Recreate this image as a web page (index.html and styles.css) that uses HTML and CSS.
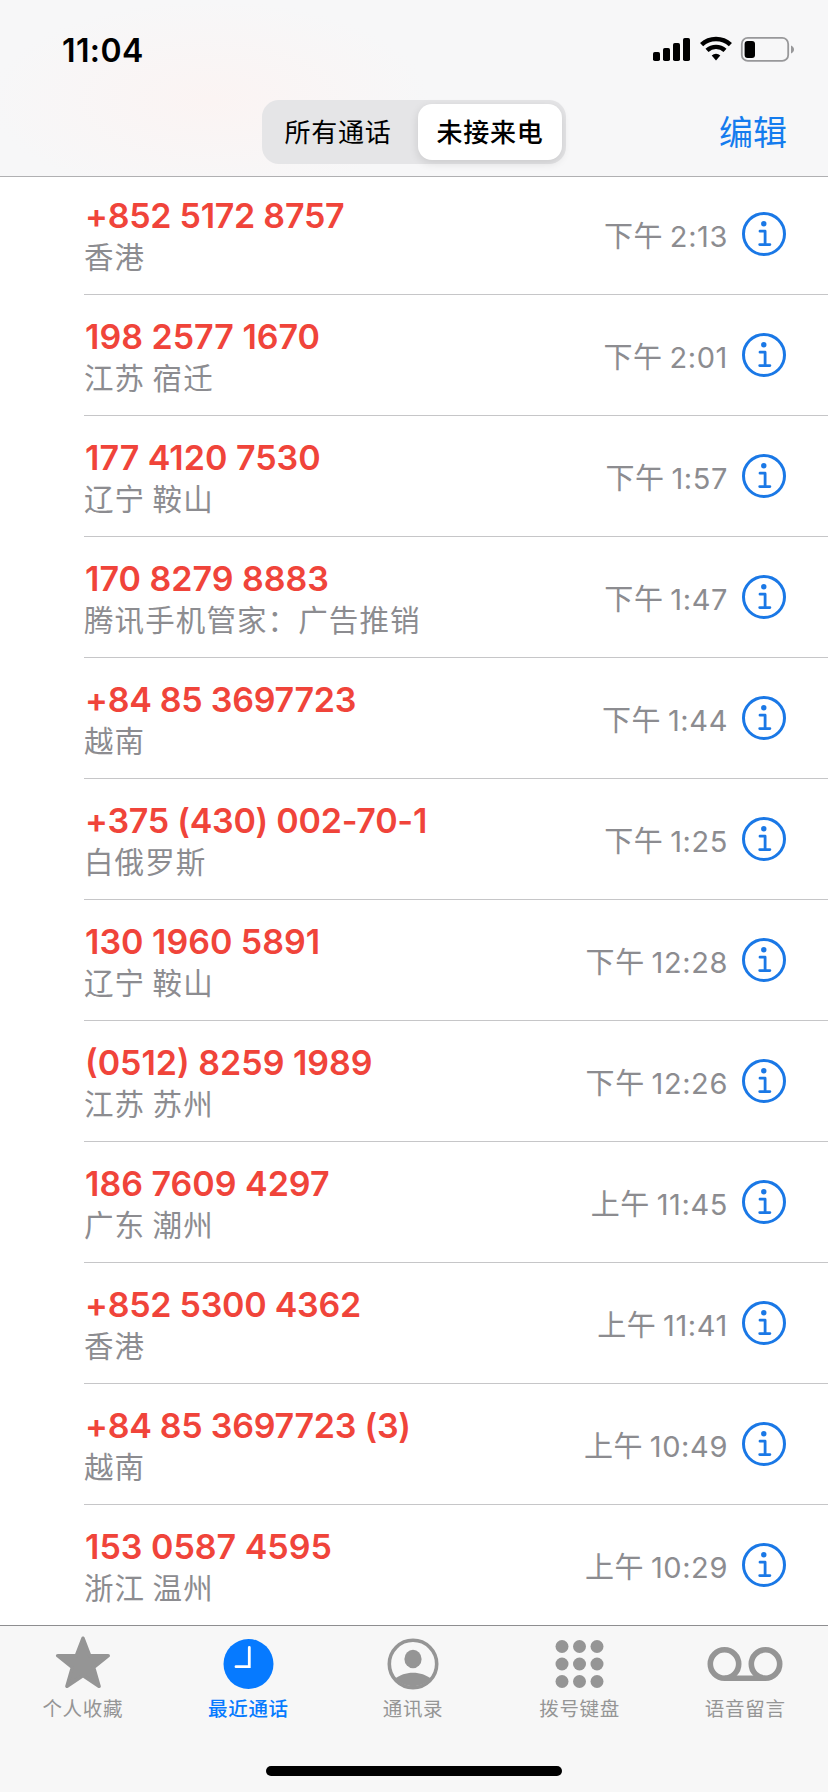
FILE: index.html
```
<!DOCTYPE html>
<html lang="zh-CN">
<head>
<meta charset="utf-8">
<title>最近通话</title>
<link rel="stylesheet" href="styles.css">
</head>
<body>
<svg class="defs" aria-hidden="true">
  <symbol id="info" viewBox="0 0 44 44">
    <circle cx="22" cy="22" r="20.5" fill="none" stroke="currentColor" stroke-width="3"/>
    <circle cx="21.8" cy="11.7" r="2.7" fill="currentColor"/>
    <path d="M18 19.2h5.1v13.3M17.7 32.6h10.2" fill="none" stroke="currentColor" stroke-width="2.8" stroke-linecap="round" stroke-linejoin="round"/>
  </symbol>
</svg>
<div class="phone">
  <header class="header">
    <div class="status">
      <div class="clock">11:04</div>
      <svg class="status-icons" width="142" height="26" viewBox="0 0 142 26">
        <rect x="0" y="16" width="7" height="9" rx="1.8"/>
        <rect x="10" y="12" width="7" height="13" rx="1.8"/>
        <rect x="20" y="7" width="7" height="18" rx="1.8"/>
        <rect x="30" y="2" width="7" height="23" rx="1.8"/>
        <path d="M48.6 8.6a21.2 21.2 0 0 1 28.8 0" fill="none" stroke="#000" stroke-width="4.6"/>
        <path d="M54 14.4a13.2 13.2 0 0 1 18 0" fill="none" stroke="#000" stroke-width="4.4"/>
        <path d="M58.7 19.4a6.4 6.4 0 0 1 8.6 0L63 24.6z"/>
        <rect x="88.8" y="1.9" width="46.4" height="23" rx="6" fill="none" stroke="#98989a" stroke-width="1.8"/>
        <rect x="91.6" y="5" width="10.4" height="17" rx="3"/>
        <path d="M138 9.5c4 1.4 4 6.600 0 8z" fill="#98989a"/>
      </svg>
    </div>
    <nav class="navbar">
      <div class="segmented">
        <div class="segment">所有通话</div>
        <div class="segment active">未接来电</div>
      </div>
      <div class="edit">编辑</div>
    </nav>
  </header>
  <main class="list">
    <div class="row"><div class="who"><div class="num intl">+852 5172 8757</div><div class="place">香港</div></div><div class="time">下午 2:13</div><svg class="info"><use href="#info"/></svg></div>
    <div class="row"><div class="who"><div class="num">198 2577 1670</div><div class="place">江苏 宿迁</div></div><div class="time">下午 2:01</div><svg class="info"><use href="#info"/></svg></div>
    <div class="row"><div class="who"><div class="num">177 4120 7530</div><div class="place">辽宁 鞍山</div></div><div class="time">下午 1:57</div><svg class="info"><use href="#info"/></svg></div>
    <div class="row"><div class="who"><div class="num">170 8279 8883</div><div class="place">腾讯手机管家：广告推销</div></div><div class="time">下午 1:47</div><svg class="info"><use href="#info"/></svg></div>
    <div class="row"><div class="who"><div class="num intl">+84 85 3697723</div><div class="place">越南</div></div><div class="time">下午 1:44</div><svg class="info"><use href="#info"/></svg></div>
    <div class="row"><div class="who"><div class="num intl">+375 (430) 002-70-1</div><div class="place">白俄罗斯</div></div><div class="time">下午 1:25</div><svg class="info"><use href="#info"/></svg></div>
    <div class="row"><div class="who"><div class="num">130 1960 5891</div><div class="place">辽宁 鞍山</div></div><div class="time">下午 12:28</div><svg class="info"><use href="#info"/></svg></div>
    <div class="row"><div class="who"><div class="num">(0512) 8259 1989</div><div class="place">江苏 苏州</div></div><div class="time">下午 12:26</div><svg class="info"><use href="#info"/></svg></div>
    <div class="row"><div class="who"><div class="num">186 7609 4297</div><div class="place">广东 潮州</div></div><div class="time">上午 11:45</div><svg class="info"><use href="#info"/></svg></div>
    <div class="row"><div class="who"><div class="num intl">+852 5300 4362</div><div class="place">香港</div></div><div class="time">上午 11:41</div><svg class="info"><use href="#info"/></svg></div>
    <div class="row"><div class="who"><div class="num intl">+84 85 3697723 (3)</div><div class="place">越南</div></div><div class="time">上午 10:49</div><svg class="info"><use href="#info"/></svg></div>
    <div class="row"><div class="who"><div class="num">153 0587 4595</div><div class="place">浙江 温州</div></div><div class="time">上午 10:29</div><svg class="info"><use href="#info"/></svg></div>
  </main>
  <footer class="tabbar">
    <div class="tabs">
      <div class="tab">
        <svg width="56" height="54" viewBox="0 0 56 54"><path d="M28 2.300 34.600 19.700H53.200L38.600 31.400 44 50.200 28 39.500 12 50.200 17.400 31.400 2.800 19.700H21.400z" fill="currentColor" stroke="currentColor" stroke-width="3.600" stroke-linejoin="round"/></svg>
        <span>个人收藏</span>
      </div>
      <div class="tab current">
        <svg width="56" height="54" viewBox="0 0 56 54"><circle cx="28.500" cy="28" r="25" fill="currentColor"/><path d="M29.300 11.500V30.700H16" fill="none" stroke="#fff" stroke-width="2.800" stroke-linecap="round"/></svg>
        <span>最近通话</span>
      </div>
      <div class="tab contacts">
        <svg width="56" height="54" viewBox="0 0 56 54"><circle cx="28" cy="28" r="23.700" fill="none" stroke="currentColor" stroke-width="3.600"/><ellipse cx="28" cy="23" rx="8.600" ry="9.200" fill="currentColor"/><path d="M10.500 42.600C14.500 39 21 36.800 28 36.800S41.500 39 45.500 42.600A23.700 23.700 0 0 1 10.500 42.600z" fill="currentColor"/></svg>
        <span>通讯录</span>
      </div>
      <div class="tab">
        <svg width="56" height="54" viewBox="0 0 56 54" fill="currentColor"><circle cx="10" cy="10.500" r="6.500"/><circle cx="27.500" cy="10.500" r="6.500"/><circle cx="45" cy="10.500" r="6.500"/><circle cx="10" cy="28" r="6.500"/><circle cx="27.500" cy="28" r="6.500"/><circle cx="45" cy="28" r="6.500"/><circle cx="10" cy="45.500" r="6.500"/><circle cx="27.500" cy="45.500" r="6.500"/><circle cx="45" cy="45.500" r="6.500"/></svg>
        <span>拨号键盘</span>
      </div>
      <div class="tab">
        <svg width="80" height="54" viewBox="0 0 80 54" fill="none" stroke="currentColor" stroke-width="5.600"><circle cx="19.500" cy="28" r="14.200"/><circle cx="60.500" cy="28" r="14.200"/><path d="M19.500 42.200H60.500"/></svg>
        <span>语音留言</span>
      </div>
    </div>
    <div class="home"></div>
  </footer>
</div>
</body>
</html>
```
FILE: styles.css
```
* { box-sizing: border-box; }
body {
  margin: 0;
  background: #fff;
  font-family: Inter, "Noto Sans CJK SC", sans-serif;
}
.defs { position: absolute; width: 0; height: 0; }
.phone { width: 828px; height: 1792px; display: flex; flex-direction: column; overflow: hidden; }

.header {
  height: 177px;
  flex: none;
  border-bottom: 1px solid #b0b0b2;
  background:
    radial-gradient(ellipse 220px 100px at 210px 100px, #fbf4f3, rgba(251, 244, 243, 0)),
    #f7f7f8;
}
.status {
  height: 100px;
  display: flex;
  justify-content: space-between;
  padding: 30px 33px 0 62px;
}
.clock { font-size: 32px; font-weight: 600; line-height: 41px; letter-spacing: 0.4px; }
.status-icons { margin-top: 6px; }
.navbar {
  height: 64px;
  display: grid;
  grid-template-columns: 262px 304px 1fr;
  align-items: start;
}
.segmented {
  grid-column: 2;
  height: 64px;
  padding: 4px;
  display: flex;
  border-radius: 17px;
  background: #e5e5e7;
}
.segment {
  width: 152px;
  height: 56px;
  padding-right: 8px;
  line-height: 57px;
  text-align: center;
  font-size: 26px;
  letter-spacing: 0.7px;
  white-space: nowrap;
}
.segment.active {
  width: 144px;
  padding-right: 0;
  border-radius: 14px;
  background: #fff;
  font-weight: 500;
  box-shadow: 0 3px 10px rgba(0, 0, 0, 0.12);
}
.edit {
  justify-self: end;
  padding-right: 41px;
  font-size: 34px;
  color: #147cee;
  line-height: 66px;
}

.list { flex: none; height: 1448px; padding-left: 84px; }
.row {
  height: 121px;
  display: flex;
  align-items: flex-start;
  border-bottom: 1px solid #c6c6c8;
  padding: 19px 42px 0 0;
}
.row:first-child { height: 118px; padding-top: 16px; }
.row:last-child { height: 120px; border-bottom: 0; }
.who { flex: 1; }
.num {
  font-size: 34px;
  font-weight: 600;
  line-height: 46px;
  color: #f0443a;
  white-space: nowrap;
  padding-left: 1px;
}
.num.intl { letter-spacing: -0.25px; }
.place {
  font-size: 29.500px;
  line-height: 36px;
  letter-spacing: 1.1px;
  word-spacing: -2px;
  color: #8c8c90;
  font-weight: 380;
  white-space: nowrap;
}
.time {
  margin-top: 20px;
  font-size: 29px;
  line-height: 47px;
  letter-spacing: 0.6px;
  word-spacing: -2px;
  font-weight: 380;
  color: #8c8c90;
  white-space: nowrap;
}
.info { width: 44px; height: 44px; margin: 19px 0 0 14px; color: #1a78e6; }

.tabbar {
  flex: 1;
  border-top: 1px solid #8e8e90;
  background: #f7f7f7;
}
.tabs { display: grid; grid-template-columns: repeat(5, 1fr); padding-top: 10px; height: 140px; }
.tab { display: flex; flex-direction: column; align-items: center; color: #959595; }
.tab.contacts { padding-right: 2px; }
.tab svg { flex: none; }
.tab span { font-size: 19.500px; line-height: 28px; margin-top: 5px; letter-spacing: 0.7px; }
.tab.current { color: #067aff; }
.tab.current span { font-weight: 500; }
.home { width: 296px; height: 10px; margin: 0 auto; border-radius: 5px; background: #000; }
```
